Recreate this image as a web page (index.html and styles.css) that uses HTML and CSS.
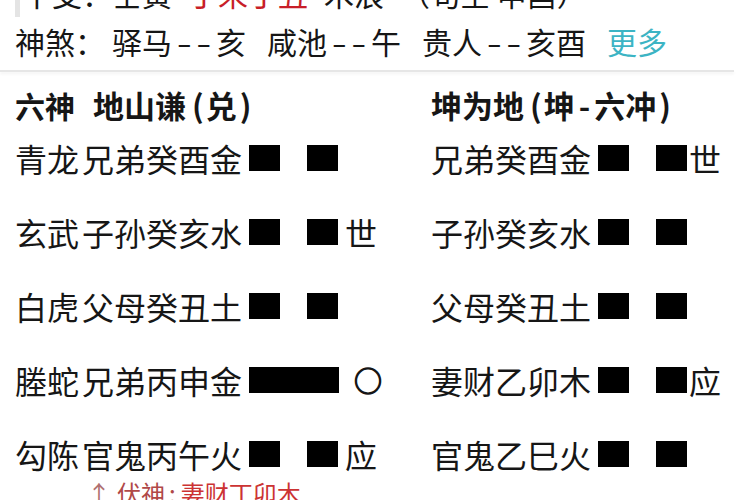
FILE: index.html
```html
<!DOCTYPE html>
<html lang="zh">
<head>
<meta charset="utf-8">
<link rel="stylesheet" href="styles.css">
</head>
<body>
<div class="info">
  <div class="line first"><span class="lab">干支：</span><span class="grp">壬寅</span><span class="red grp">丁未丁丑</span><span class="grp">木浪</span><span>（旬空 申酉）</span></div>
  <div class="line"><span class="lab">神煞：</span><span class="grp">驿马<span class="dash">--</span>亥</span><span class="grp">咸池<span class="dash">--</span>午</span><span class="grp">贵人<span class="dash">--</span>亥酉</span><span class="more">更多</span></div>
</div>
<div class="sep"></div>
<div class="board">
  <div class="col">
    <div class="head"><span class="hn">六神</span>地山谦<span class="po">(</span>兑<span class="pc">)</span></div>
    <div class="row"><span class="god">青龙</span><span class="yao">兄弟癸酉金</span><span class="lines"><i class="seg"></i><i class="seg"></i></span></div>
    <div class="row"><span class="god">玄武</span><span class="yao">子孙癸亥水</span><span class="lines"><i class="seg"></i><i class="seg"></i></span><span class="mark">世</span></div>
    <div class="row"><span class="god">白虎</span><span class="yao">父母癸丑土</span><span class="lines"><i class="seg"></i><i class="seg"></i></span></div>
    <div class="row"><span class="god">塍蛇</span><span class="yao">兄弟丙申金</span><span class="lines"><i class="full"></i></span><span class="mark circle">○</span></div>
    <div class="row"><span class="god">勾陈</span><span class="yao">官鬼丙午火</span><span class="lines"><i class="seg"></i><i class="seg"></i></span><span class="mark">应</span></div>
    <div class="note"><span class="arrow">↑</span><span class="nl">伏神<span class="colon">:</span></span><span class="nv">妻财丁卯木</span></div>
  </div>
  <div class="col">
    <div class="head">坤为地<span class="po">(</span>坤<span class="hy">-</span>六冲<span class="pc">)</span></div>
    <div class="row"><span class="yao">兄弟癸酉金</span><span class="lines"><i class="seg"></i><i class="seg"></i></span><span class="mark tight">世</span></div>
    <div class="row"><span class="yao">子孙癸亥水</span><span class="lines"><i class="seg"></i><i class="seg"></i></span></div>
    <div class="row"><span class="yao">父母癸丑土</span><span class="lines"><i class="seg"></i><i class="seg"></i></span></div>
    <div class="row"><span class="yao">妻财乙卯木</span><span class="lines"><i class="seg"></i><i class="seg"></i></span><span class="mark tight">应</span></div>
    <div class="row"><span class="yao">官鬼乙巳火</span><span class="lines"><i class="seg"></i><i class="seg"></i></span></div>
  </div>
</div>
</body>
</html>
```
FILE: styles.css
```css
html, body {
  margin: 0;
  padding: 0;
  background: #ffffff;
  overflow: hidden;
}
body {
  font-family: "Noto Sans CJK SC", "Noto Sans", sans-serif;
  color: #161616;
  width: 750px;
  height: 500px;
}
.info {
  margin-top: -31px;
  padding-left: 15px;
}
.line {
  display: flex;
  align-items: center;
  font-size: 30px;
  line-height: 48px;
  white-space: nowrap;
}
.line.first {
  border-left: 5px solid #e4e4e4;
  padding-left: 2px;
}
.line.first .grp {
  margin-right: 16px;
}
.lab {
  margin-right: 7px;
}
.line.first .lab {
  margin-right: 0;
}
.grp {
  display: inline-flex;
  margin-right: 21px;
}
.red {
  color: #c81e28;
}
.dash {
  display: inline-block;
  width: 44px;
  text-align: center;
  letter-spacing: 3px;
  text-indent: 3px;
  transform: scaleX(1.45);
}
.more {
  color: #3cb4c4;
}
.sep {
  width: 734px;
  height: 2px;
  margin-top: 5px;
  background: #e6e6e6;
  box-shadow: 0 2px 3px rgba(0, 0, 0, 0.06);
}
.board {
  display: grid;
  grid-template-columns: 416px 1fr;
  padding-left: 15px;
  padding-top: 17px;
}
.col {
  display: flex;
  flex-direction: column;
}
.head {
  font-size: 31px;
  font-weight: 700;
  line-height: 32px;
  white-space: nowrap;
}
.hn {
  font-size: 30px;
  margin-right: 18px;
}
.po {
  margin-left: 6px;
  margin-right: 2px;
}
.pc {
  margin-left: 3px;
}
.hy {
  margin: 0 4px;
}
.row {
  height: 74px;
  display: flex;
  align-items: center;
  font-size: 32px;
  white-space: nowrap;
}
.god {
  margin-right: 3px;
}
.lines {
  display: flex;
  gap: 27px;
  margin-left: 7px;
}
.lines i {
  display: block;
  height: 26px;
  background: #000;
}
.lines .seg {
  width: 31px;
}
.lines .full {
  width: 90px;
}
.mark {
  margin-left: 7px;
}
.mark.tight {
  margin-left: 2px;
}
.mark.circle {
  margin-left: 15px;
  font-size: 28px;
  -webkit-text-stroke: 1.2px #161616;
}
.note {
  margin-top: -10px;
  padding-left: 72px;
  font-size: 24px;
  line-height: 24px;
  white-space: nowrap;
}
.arrow {
  color: #b07070;
  margin-right: 6px;
}
.nl {
  color: #b04848;
}
.colon {
  margin: 0 5px 0 4px;
}
.nv {
  color: #cc3333;
}
```
